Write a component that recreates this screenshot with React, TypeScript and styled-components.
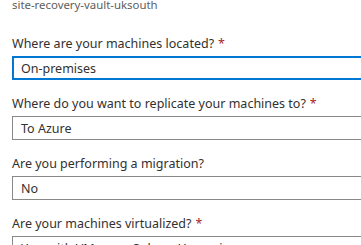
import React from 'react';
import styled, { createGlobalStyle } from 'styled-components';

const GlobalStyle = createGlobalStyle`
  body {
    margin: 0;
    background: #ffffff;
    font-family: "Noto Sans", "Open Sans", sans-serif;
    overflow: hidden;
  }
`;

const S = {
  Page: styled.div`
    width: 361px;
    height: 245px;
    overflow: hidden;
    padding-left: 12px;
    box-sizing: border-box;
  `,

  VaultName: styled.div`
    margin-top: -2px;
    font-size: 11.4px;
    line-height: 14px;
    color: #605e5c;
  `,

  Form: styled.div`
    display: flex;
    flex-direction: column;
    gap: 16px;
    margin-top: 24px;
  `,

  Field: styled.div`
    display: flex;
    flex-direction: column;
    gap: 4px;
  `,

  Label: styled.label`
    font-size: 12.5px;
    line-height: 16px;
    color: #323130;
    white-space: nowrap;
  `,

  Required: styled.span`
    color: #a4262c;
    margin-left: 4px;
  `,

  Select: styled.div<{ $focused?: boolean }>`
    width: 400px;
    height: 24px;
    box-sizing: border-box;
    border: ${(p) => (p.$focused ? '2px solid #0078d4' : '1px solid #8a8886')};
    padding-left: ${(p) => (p.$focused ? '7px' : '8px')};
    display: flex;
    align-items: center;
    font-size: 12.5px;
    color: #323130;
    white-space: nowrap;
  `,
};

const fields = [
  { label: 'Where are your machines located?', value: 'On-premises', required: true, focused: true },
  { label: 'Where do you want to replicate your machines to?', value: 'To Azure', required: true },
  { label: 'Are you performing a migration?', value: 'No', required: false },
  { label: 'Are your machines virtualized?', value: 'Yes, with VMware vSphere Hypervisor', required: true },
];

const App = () => (
  <S.Page>
    <GlobalStyle />
    <S.VaultName>site-recovery-vault-uksouth</S.VaultName>
    <S.Form>
      {fields.map((f) => (
        <S.Field key={f.label}>
          <S.Label>
            {f.label}
            {f.required && <S.Required>*</S.Required>}
          </S.Label>
          <S.Select $focused={f.focused}>{f.value}</S.Select>
        </S.Field>
      ))}
    </S.Form>
  </S.Page>
);

export default App;
